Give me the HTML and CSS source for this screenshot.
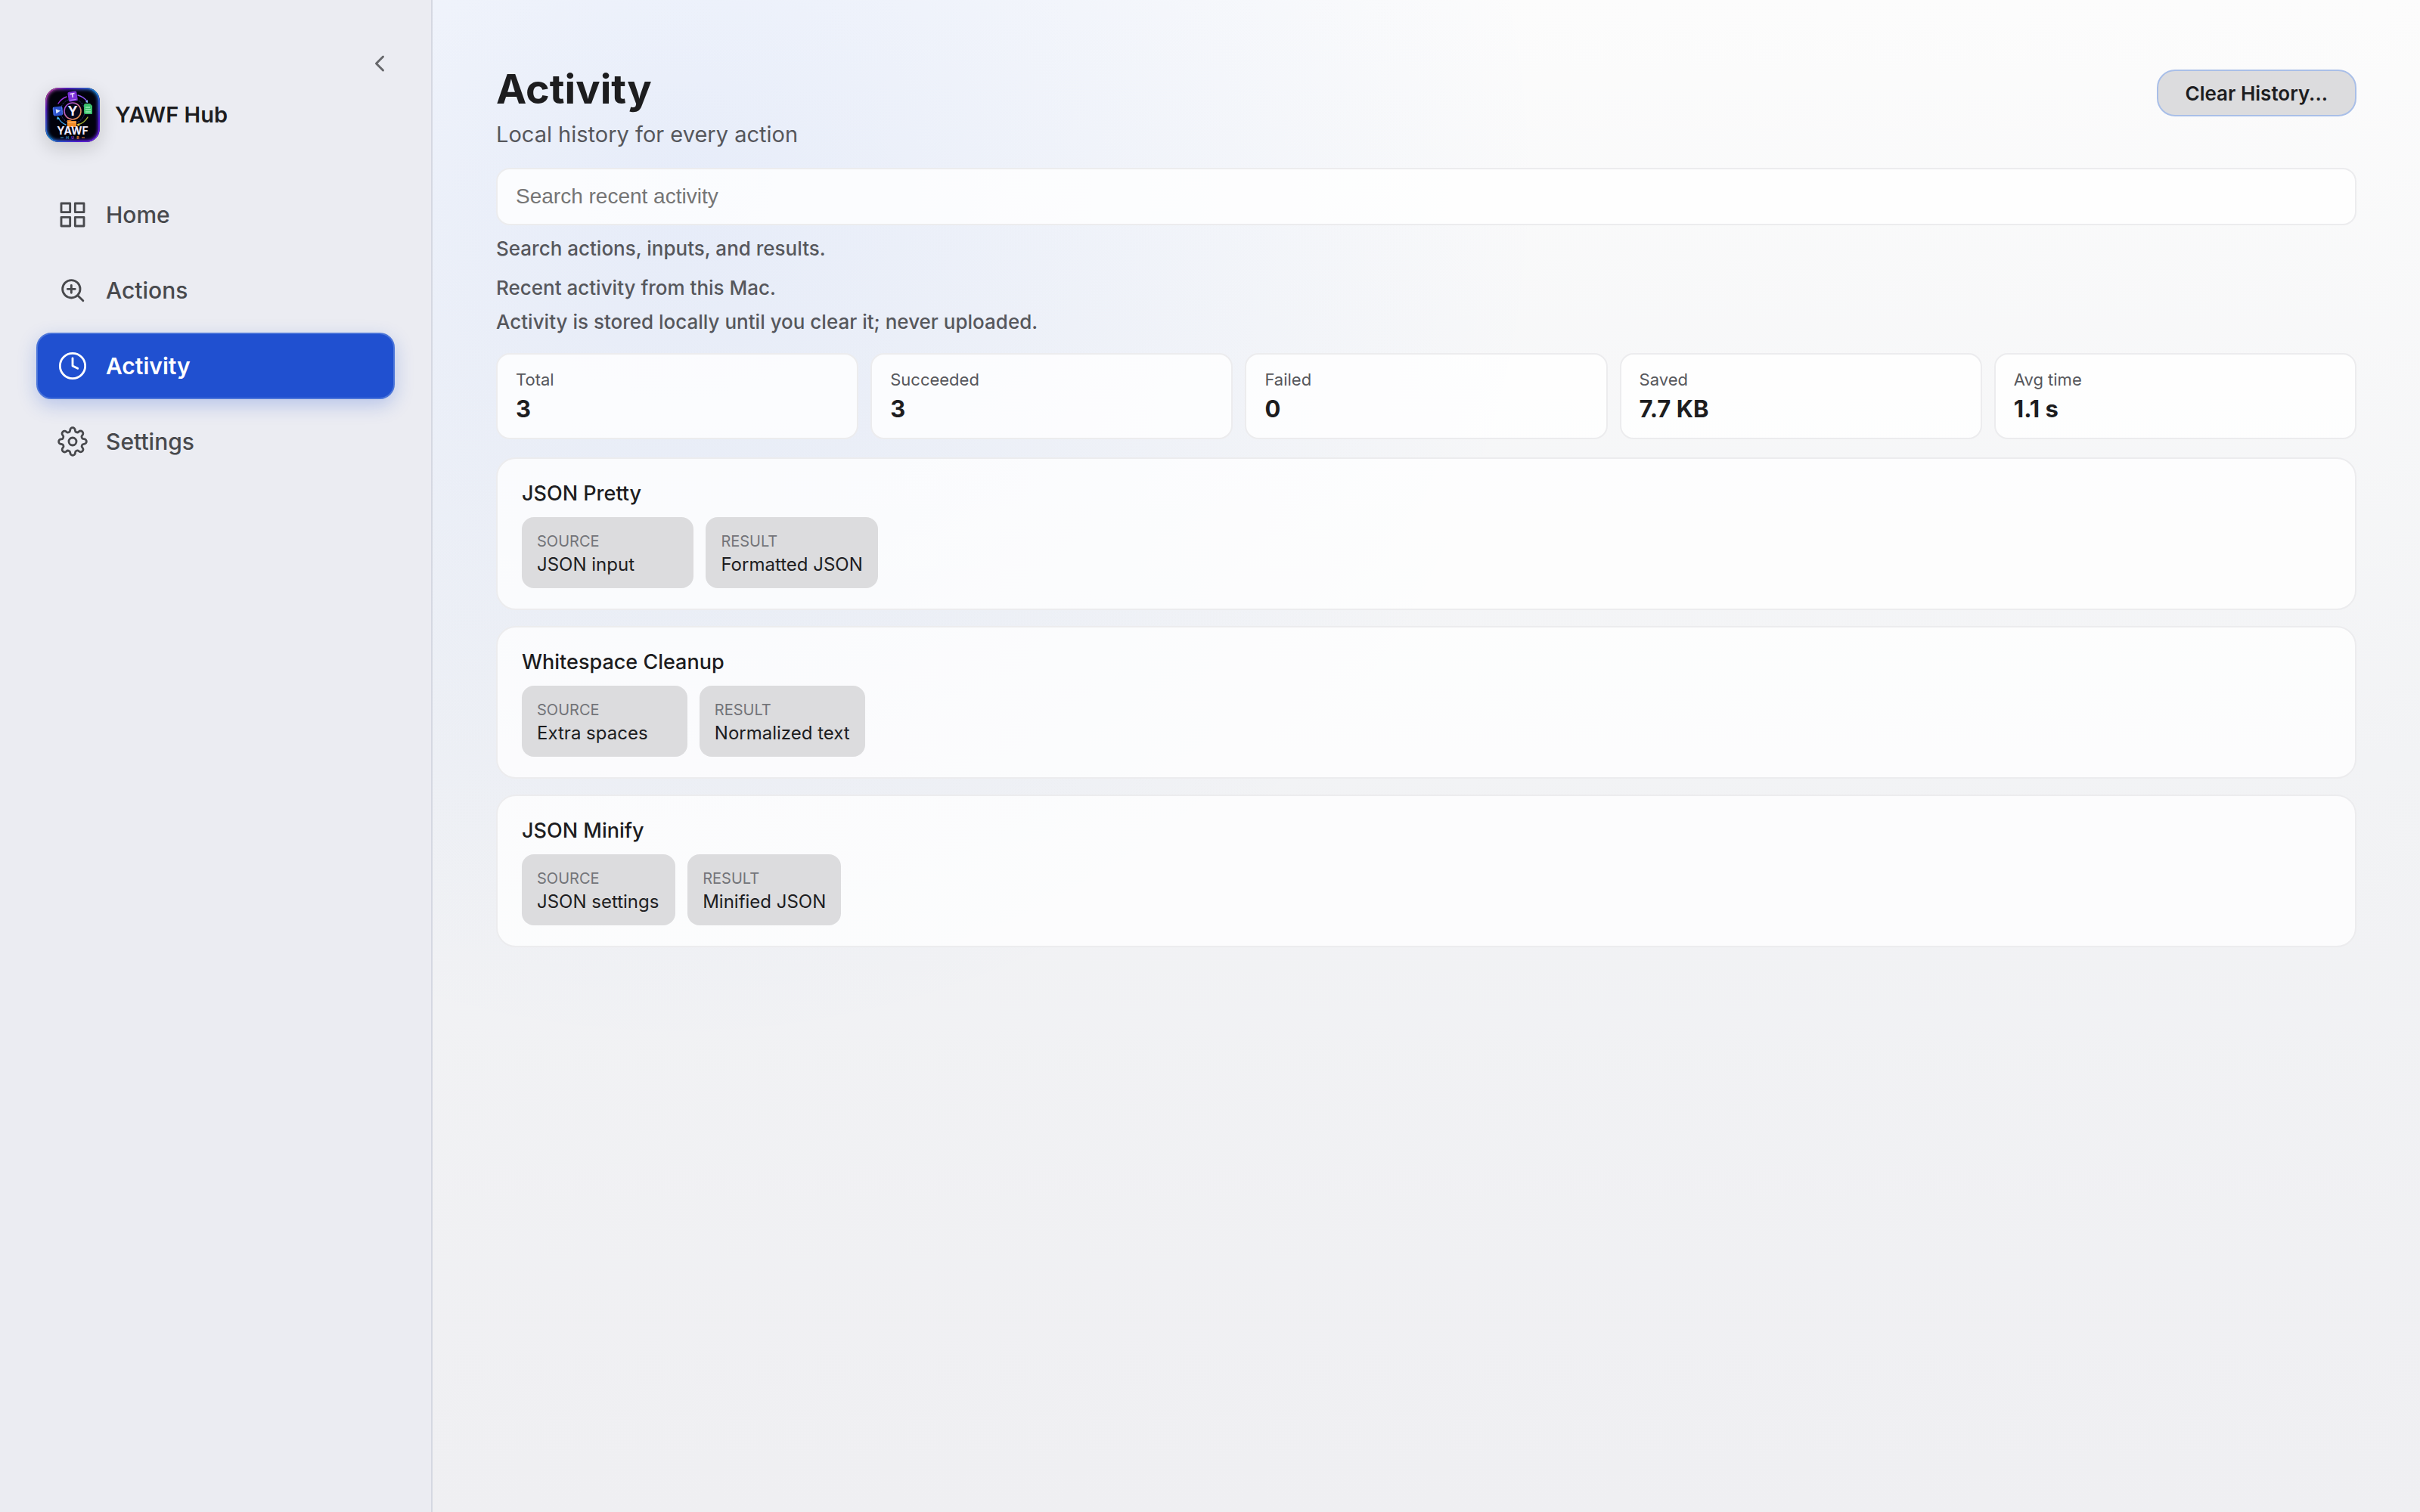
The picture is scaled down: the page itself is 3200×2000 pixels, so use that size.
FILE: index.html
```html
<!DOCTYPE html>
<html lang="en">
<head>
    <meta charset="UTF-8">
    <meta name="viewport" content="width=device-width, initial-scale=1.0">
    <title>YAWF Hub - Activity</title>
    <link rel="stylesheet" href="styles.css">
</head>
<body>
    <div class="app">
        <aside class="sidebar">
            <button class="collapse" type="button" aria-label="Collapse sidebar">
                <svg viewBox="0 0 24 24"><path d="M15 6l-6 6 6 6"/></svg>
            </button>
            <div class="brand">
                <svg class="logo" viewBox="0 0 72 72" aria-hidden="true">
                    <defs>
                        <linearGradient id="rim" x1="0" y1="0" x2="1" y2="1">
                            <stop offset="0" stop-color="#e0559a"/>
                            <stop offset="0.2" stop-color="#5a1fd0"/>
                            <stop offset="0.5" stop-color="#1c8ee0"/>
                            <stop offset="0.8" stop-color="#5a1ff0"/>
                            <stop offset="1" stop-color="#7a2be8"/>
                        </linearGradient>
                        <linearGradient id="ring" x1="0" y1="0" x2="1" y2="1">
                            <stop offset="0" stop-color="#8a3cf0"/>
                            <stop offset="0.5" stop-color="#d070a0"/>
                            <stop offset="1" stop-color="#f0a030"/>
                        </linearGradient>
                        <filter id="glow" x="-20%" y="-20%" width="140%" height="140%">
                            <feGaussianBlur stdDeviation="2"/>
                        </filter>
                        <clipPath id="tile"><rect width="72" height="72" rx="17"/></clipPath>
                    </defs>
                    <g clip-path="url(#tile)">
                        <rect width="72" height="72" fill="#02020c"/>
                        <rect width="72" height="72" rx="17" fill="none" stroke="url(#rim)" stroke-width="5" filter="url(#glow)"/>
                        <rect x="1" y="1" width="70" height="70" rx="16" fill="none" stroke="url(#rim)" stroke-width="1"/>
                        <g fill="none" stroke-width="1.4" stroke-linecap="round">
                            <path d="M17 21a21 21 0 0 1 11-9" stroke="#9a35e0"/>
                            <path d="M43 10a21 21 0 0 1 12 8" stroke="#8a55f0"/>
                            <path d="M27 49a21 21 0 0 1-10-9" stroke="#3aa0e8"/>
                            <path d="M56 39a21 21 0 0 1-13 10" stroke="#a8b838"/>
                            <circle cx="36" cy="31" r="16" stroke="#2a3a80" stroke-width="1" stroke-dasharray="2 2"/>
                        </g>
                        <path d="M53 19l3 1 0-4z" fill="#8ab8ff"/>
                        <path d="M15 42l1-4 3 3z" fill="#5ac8ff"/>
                        <path d="M45 47l-4 2 4 2z" fill="#e8c840"/>
                        <circle cx="36" cy="31" r="11" fill="#05061a" stroke="url(#ring)" stroke-width="1.6"/>
                        <g transform="rotate(-9 36 11)">
                            <rect x="30" y="5" width="12" height="13" rx="2" fill="#7a30d8"/>
                            <path d="M33 8h6M36 8v5" stroke="#f0dcff" stroke-width="1.6"/>
                            <path d="M32 16h8" stroke="#b884f4" stroke-width="1"/>
                        </g>
                        <g transform="rotate(-6 16 31)">
                            <rect x="10" y="25" width="13" height="12" rx="2" fill="#2b50cc"/>
                            <path d="M11 26v10M22 26v10" stroke="#7aa4ff" stroke-width="1" stroke-dasharray="1 1"/>
                            <path d="M14 28l6 3-6 3z" fill="#d8e6ff"/>
                        </g>
                        <path d="M53 21h6l3 3v10a1 1 0 0 1-1 1h-8a2 2 0 0 1-2-2v-10a2 2 0 0 1 2-2z" fill="#3cc06c"/>
                        <path d="M53 26h6M53 29h7M53 32h7" stroke="#c8ffd8" stroke-width="1"/>
                        <path d="M29 43h4l2 1h6v8H29z" fill="#f08a28"/>
                        <path d="M29 46h12" stroke="#ffc070" stroke-width="1"/>
                        <g font-family="Inter, sans-serif" text-anchor="middle">
                            <text x="36" y="37" font-size="18" font-weight="700" fill="#f0ecff">Y</text>
                            <text x="36" y="62" font-size="14" font-weight="700" fill="#f0ecff">YAWF</text>
                            <text x="29" y="68" font-size="5" font-weight="700" fill="#3a9ad0">H</text>
                            <text x="36" y="68" font-size="5" font-weight="700" fill="#8a44e8">U</text>
                            <text x="43" y="68" font-size="5" font-weight="700" fill="#e88a30">B</text>
                        </g>
                        <path d="M20 66h4" stroke="#3a9ad0" stroke-width="1"/>
                        <path d="M48 66h4" stroke="#e88a30" stroke-width="1"/>
                    </g>
                </svg>
                <span class="brand-name">YAWF Hub</span>
            </div>
            <nav class="nav">
                <a class="nav-item" href="#home">
                    <svg viewBox="0 0 24 24"><rect x="3" y="3" width="7" height="7"/><rect x="14" y="3" width="7" height="7"/><rect x="3" y="14" width="7" height="7"/><rect x="14" y="14" width="7" height="7"/></svg>
                    <span>Home</span>
                </a>
                <a class="nav-item" href="#actions">
                    <svg viewBox="0 0 24 24"><circle cx="11" cy="11" r="7"/><path d="M16 16l4.300 4.300M11 8v6M8 11h6"/></svg>
                    <span>Actions</span>
                </a>
                <a class="nav-item active" href="#activity" aria-current="page">
                    <svg viewBox="0 0 24 24"><circle cx="12" cy="12" r="10"/><path d="M12 6v6l4 2"/></svg>
                    <span>Activity</span>
                </a>
                <a class="nav-item" href="#settings">
                    <svg viewBox="0 0 24 24"><circle cx="12" cy="12" r="3"/><path d="M19.400 15a1.650 1.650 0 0 0 .33 1.820l.06.06a2 2 0 0 1 0 2.830 2 2 0 0 1-2.830 0l-.06-.06a1.650 1.650 0 0 0-1.820-.33 1.650 1.650 0 0 0-1 1.510V21a2 2 0 0 1-2 2 2 2 0 0 1-2-2v-.09A1.650 1.650 0 0 0 9 19.400a1.650 1.650 0 0 0-1.820.33l-.06.06a2 2 0 0 1-2.830 0 2 2 0 0 1 0-2.830l.06-.06a1.650 1.650 0 0 0 .33-1.820 1.650 1.650 0 0 0-1.510-1H3a2 2 0 0 1-2-2 2 2 0 0 1 2-2h.09A1.650 1.650 0 0 0 4.600 9a1.650 1.650 0 0 0-.33-1.820l-.06-.06a2 2 0 0 1 0-2.830 2 2 0 0 1 2.830 0l.06.06a1.650 1.650 0 0 0 1.820.33H9a1.650 1.650 0 0 0 1-1.510V3a2 2 0 0 1 2-2 2 2 0 0 1 2 2v.09a1.650 1.650 0 0 0 1 1.510 1.650 1.650 0 0 0 1.820-.33l.06-.06a2 2 0 0 1 2.830 0 2 2 0 0 1 0 2.830l-.06.06a1.650 1.650 0 0 0-.33 1.820V9a1.650 1.650 0 0 0 1.510 1H21a2 2 0 0 1 2 2 2 2 0 0 1-2 2h-.09a1.650 1.650 0 0 0-1.510 1z"/></svg>
                    <span>Settings</span>
                </a>
            </nav>
        </aside>

        <main class="main">
            <header class="header">
                <div>
                    <h1>Activity</h1>
                    <p class="subtitle">Local history for every action</p>
                </div>
                <button class="clear" type="button">Clear History...</button>
            </header>

            <input class="search" id="search" type="search" placeholder="Search recent activity">
            <div class="hints">
                <label for="search">Search actions, inputs, and results.</label>
                <div class="notes">
                    <p>Recent activity from this Mac.</p>
                    <p>Activity is stored locally until you clear it; never uploaded.</p>
                </div>
            </div>

            <section class="stats">
                <div class="stat"><span>Total</span><strong>3</strong></div>
                <div class="stat"><span>Succeeded</span><strong>3</strong></div>
                <div class="stat"><span>Failed</span><strong>0</strong></div>
                <div class="stat"><span>Saved</span><strong>7.7 KB</strong></div>
                <div class="stat"><span>Avg time</span><strong>1.1 s</strong></div>
            </section>

            <section class="history">
                <article class="entry">
                    <h2>JSON Pretty</h2>
                    <div class="chips">
                        <div class="chip"><span>SOURCE</span><p>JSON input</p></div>
                        <div class="chip"><span>RESULT</span><p>Formatted JSON</p></div>
                    </div>
                </article>
                <article class="entry">
                    <h2>Whitespace Cleanup</h2>
                    <div class="chips">
                        <div class="chip"><span>SOURCE</span><p>Extra spaces</p></div>
                        <div class="chip"><span>RESULT</span><p>Normalized text</p></div>
                    </div>
                </article>
                <article class="entry">
                    <h2>JSON Minify</h2>
                    <div class="chips">
                        <div class="chip"><span>SOURCE</span><p>JSON settings</p></div>
                        <div class="chip"><span>RESULT</span><p>Minified JSON</p></div>
                    </div>
                </article>
            </section>
        </main>
    </div>
</body>
</html>
```
FILE: styles.css
```css
* {
    box-sizing: border-box;
    margin: 0;
    padding: 0;
}

body {
    font-family: Inter, "Liberation Sans", sans-serif;
    color: #1d1d1f;
    background:
        radial-gradient(circle at 28% 12%, rgba(37, 99, 235, 0.09), transparent 1150px),
        linear-gradient(180deg, #fcfcfc 0%, #f2f3f5 50%, #efeff2 100%);
}

.app {
    display: flex;
    min-height: 100vh;
}

/* sidebar */
.sidebar {
    width: 572px;
    flex-shrink: 0;
    padding: 56px 48px;
    background: #ebecf2;
    border-right: 2px solid #d5d8e2;
    display: flex;
    flex-direction: column;
}

.collapse {
    align-self: flex-end;
    width: 40px;
    height: 56px;
    border: none;
    background: none;
    cursor: pointer;
}

.collapse svg {
    display: block;
    width: 36px;
    height: 36px;
    margin: 0 auto;
    fill: none;
    stroke: #66676b;
    stroke-width: 2;
    stroke-linecap: round;
    stroke-linejoin: round;
}

.brand {
    display: flex;
    align-items: center;
    gap: 20px;
    padding: 4px 12px 52px;
}

.logo {
    width: 72px;
    height: 72px;
    border-radius: 17px;
    box-shadow: 0 8px 24px rgba(0, 0, 0, 0.16);
}

.brand-name {
    font-size: 29px;
    line-height: 38px;
    font-weight: 600;
}

.nav {
    display: flex;
    flex-direction: column;
    gap: 12px;
}

.nav-item {
    display: flex;
    align-items: center;
    gap: 24px;
    height: 88px;
    padding: 0 26px;
    border: 2px solid transparent;
    border-radius: 20px;
    color: #48494d;
    font-size: 30px;
    line-height: 40px;
    font-weight: 500;
    text-decoration: none;
}

.nav-item svg {
    width: 40px;
    height: 40px;
    fill: none;
    stroke: currentColor;
    stroke-width: 1.7;
    stroke-linecap: round;
    stroke-linejoin: round;
}

.nav-item.active {
    color: #fff;
    font-weight: 600;
    background: #2050d0;
    border-color: #4a74d9;
    box-shadow: 0 8px 24px rgba(32, 80, 208, 0.25);
}

/* content */
.main {
    flex: 1;
    padding: 84px;
}

.header {
    display: flex;
    justify-content: space-between;
    align-items: flex-start;
    margin-bottom: 25px;
}

h1 {
    font-size: 54px;
    line-height: 68px;
    font-weight: 700;
}

.subtitle {
    margin-top: 7px;
    font-size: 29px;
    line-height: 38px;
    color: #56575c;
}

.clear {
    height: 62px;
    margin-top: 8px;
    padding: 0 36px;
    border: 2px solid #a9bfe8;
    border-radius: 24px;
    background: #dcdcde;
    color: #1d1d1f;
    font: 600 26px Inter, "Liberation Sans", sans-serif;
    cursor: pointer;
}

.search {
    display: block;
    width: 100%;
    height: 76px;
    padding: 0 24px;
    border: 2px solid #ececee;
    border-radius: 18px;
    background: rgba(255, 255, 255, 0.8);
    font: 28px "Liberation Sans", sans-serif;
    appearance: none;
}

.search::placeholder {
    color: #757575;
}

.hints {
    display: flex;
    flex-direction: column;
    gap: 16px;
    margin: 13px 0 23px;
    color: #56575c;
    font-size: 26px;
    line-height: 36px;
    font-weight: 500;
}

.notes {
    display: flex;
    flex-direction: column;
    gap: 9px;
}

.stats {
    display: grid;
    grid-template-columns: repeat(5, 1fr);
    gap: 16px;
    margin-bottom: 24px;
}

.stat {
    display: flex;
    flex-direction: column;
    gap: 4px;
    padding: 18px 24px;
    border: 2px solid #ececee;
    border-radius: 18px;
    background: rgba(255, 255, 255, 0.8);
}

.stat span {
    font-size: 22px;
    line-height: 30px;
    color: #56575c;
}

.stat strong {
    font-size: 31px;
    line-height: 40px;
    font-weight: 700;
}

.history {
    display: flex;
    flex-direction: column;
    gap: 21px;
}

.entry {
    padding: 28px 32px 27px;
    border: 2px solid #ececee;
    border-radius: 26px;
    background: rgba(255, 255, 255, 0.76);
}

.entry h2 {
    margin-bottom: 13px;
    font-size: 27px;
    line-height: 36px;
    font-weight: 500;
}

.chips {
    display: inline-grid;
    grid-template-columns: 1fr 1fr;
    gap: 16px;
    vertical-align: top;
}

.chip {
    padding: 18px 20px 15px;
    border-radius: 16px;
    background: #dcdcde;
}

.chip span {
    display: block;
    font-size: 20px;
    line-height: 29px;
    color: #737479;
}

.chip p {
    font-size: 24px;
    line-height: 32px;
}
```
